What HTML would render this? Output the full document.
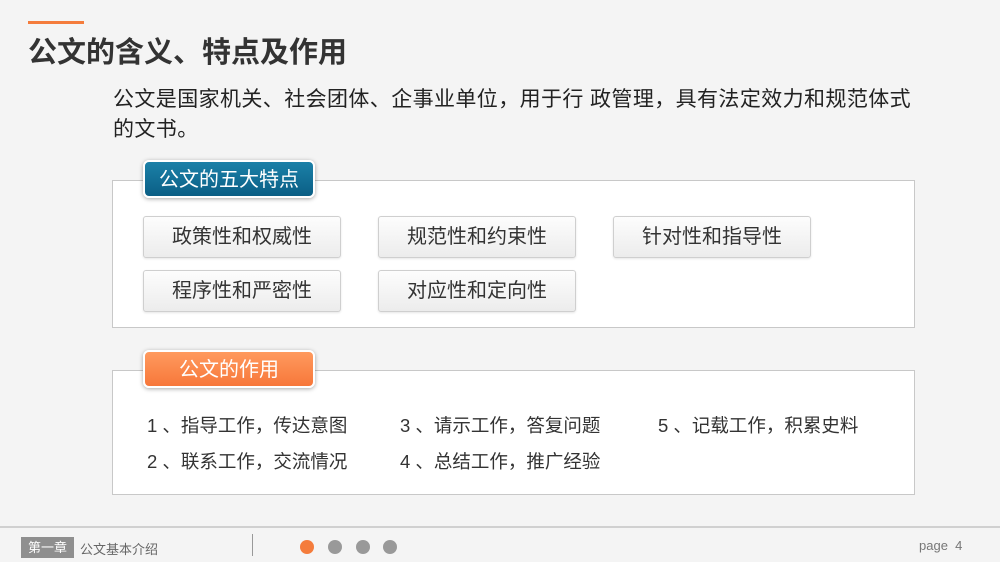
<!DOCTYPE html><html><head><meta charset="utf-8"><style>
*{margin:0;padding:0;box-sizing:border-box}
body{width:1000px;height:562px;background:#f4f4f4;position:relative;overflow:hidden;font-family:"Liberation Sans","Noto Sans CJK SC",sans-serif;color:#333}
.a{position:absolute}
.box{position:absolute;background:#fff;border:1px solid #c8c8c8}
.btn{position:absolute;width:198px;height:42px;border:1px solid #cfcfcf;border-radius:3px;background:linear-gradient(#fdfdfd,#ececec);font-size:20px;text-align:center;line-height:40px;color:#333;box-shadow:0 1px 2px rgba(0,0,0,.1)}
.lab{position:absolute;width:172px;height:38px;border-radius:6px;color:#fff;font-size:20px;text-align:center;line-height:37px;border:2px solid #fff;box-shadow:0 1px 4px rgba(0,0,0,.35)}
.li{position:absolute;font-size:18.5px;color:#333}
.dot{position:absolute;top:540px;width:14px;height:14px;border-radius:50%;background:#999}
</style></head><body>
<div class="a" style="left:28px;top:21px;width:56px;height:3px;background:#f47c3c"></div>
<div class="a" style="left:28px;top:29px;font-size:29px;font-weight:bold;color:#333">公文的含义、特点及作用</div>
<div class="a" style="left:113px;top:85px;width:808px;font-size:21px;letter-spacing:0.4px;line-height:30px;color:#222">公文是国家机关、社会团体、企事业单位，用于行 政管理，具有法定效力和规范体式的文书。</div>
<div class="box" style="left:112px;top:180px;width:803px;height:148px"></div>
<div class="lab" style="left:143px;top:160px;background:linear-gradient(#1b80a8,#0b5f85)">公文的五大特点</div>
<div class="btn" style="left:143px;top:216px">政策性和权威性</div>
<div class="btn" style="left:378px;top:216px">规范性和约束性</div>
<div class="btn" style="left:613px;top:216px">针对性和指导性</div>
<div class="btn" style="left:143px;top:270px">程序性和严密性</div>
<div class="btn" style="left:378px;top:270px">对应性和定向性</div>
<div class="box" style="left:112px;top:370px;width:803px;height:125px"></div>
<div class="lab" style="left:143px;top:350px;background:linear-gradient(#ff9a5e,#f7773a)">公文的作用</div>
<div class="li" style="left:147px;top:412px">1 、指导工作，传达意图</div>
<div class="li" style="left:400px;top:412px">3 、请示工作，答复问题</div>
<div class="li" style="left:658px;top:412px">5 、记载工作，积累史料</div>
<div class="li" style="left:147px;top:448px">2 、联系工作，交流情况</div>
<div class="li" style="left:400px;top:448px">4 、总结工作，推广经验</div>
<div class="a" style="left:0;top:526px;width:1000px;height:2px;background:#d0d0d0"></div>
<div class="a" style="left:21px;top:537px;width:53px;height:21px;background:#8f8f8f;color:#fff;font-size:13px;line-height:21px;text-align:center">第一章</div>
<div class="a" style="left:80px;top:539px;font-size:13px;color:#666">公文基本介绍</div>
<div class="a" style="left:252px;top:534px;width:1px;height:22px;background:#999"></div>
<div class="dot" style="left:300px;background:#f47c3c"></div>
<div class="dot" style="left:328px"></div>
<div class="dot" style="left:356px"></div>
<div class="dot" style="left:383px"></div>
<div class="a" style="left:919px;top:538px;font-size:13px;color:#777">page &nbsp;4</div>
</body></html>
